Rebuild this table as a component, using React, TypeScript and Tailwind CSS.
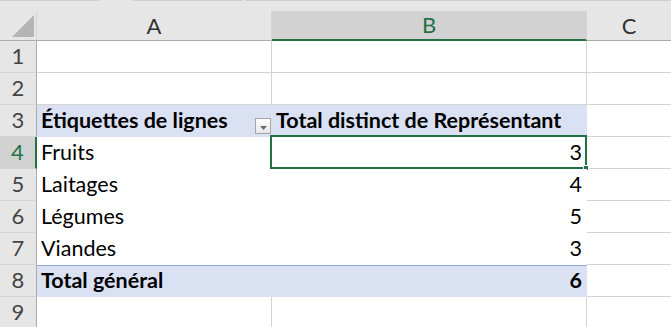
import React from 'react'

const FONT = { fontFamily: 'Lato, "Open Sans", sans-serif' }

const GRID = 'border-[#d4d4d4]'
const PIVOT_BG = 'bg-[#d9e1f2]'

type Row = { n: number; a?: string; b?: string; kind?: 'head' | 'item' | 'total' | 'blank' }

const rows: Row[] = [
  { n: 1, kind: 'blank' },
  { n: 2, kind: 'blank' },
  { n: 3, a: 'Étiquettes de lignes', b: 'Total distinct de Représentant', kind: 'head' },
  { n: 4, a: 'Fruits', b: '3', kind: 'item' },
  { n: 5, a: 'Laitages', b: '4', kind: 'item' },
  { n: 6, a: 'Légumes', b: '5', kind: 'item' },
  { n: 7, a: 'Viandes', b: '3', kind: 'item' },
  { n: 8, a: 'Total général', b: '6', kind: 'total' },
  { n: 9, kind: 'blank' },
]

function FilterButton() {
  return (
    <div className="absolute right-[1px] bottom-[2px] w-[16px] h-[16px] border border-[#a6a6a6] bg-gradient-to-b from-[#fdfdfd] to-[#e8e8e8] flex items-center justify-center">
      <svg width="7" height="4" viewBox="0 0 7 4" className="mt-[3px]">
        <path d="M0 0h7L3.5 4z" fill="#6b6b6b" />
      </svg>
    </div>
  )
}

function SheetRow({ row }: { row: Row }) {
  const active = row.n === 4
  const pivot = row.kind === 'head' || row.kind === 'total'
  const inTable = row.kind !== 'blank'
  const bold = pivot ? 'font-bold' : ''

  // borders of A/B cells depend on whether the row belongs to the pivot table
  let abBottom = `border-b ${GRID}`
  if (row.kind === 'head') abBottom = 'border-b border-[#d9e1f2]'
  if (row.kind === 'item') abBottom = 'border-b border-white'
  if (row.kind === 'total') abBottom = 'border-b border-[#d9e1f2]'
  const totalTop = row.kind === 'total' ? 'border-t border-t-[#8ea9db]' : ''

  return (
    <div className="flex h-[32px]">
      <div
        className={`w-[37px] shrink-0 h-[32px] flex items-end justify-center pb-[2px] text-[22px] leading-[28px] border-b border-[#d4d4d4] ${
          active
            ? 'bg-[#d2d2d2] text-[#217346] border-r-2 border-r-[#217346]'
            : 'bg-[#e6e6e6] text-[#444] border-r border-r-[#ababab]'
        }`}
      >
        {row.n}
      </div>
      <div
        className={`relative w-[235px] shrink-0 flex items-end pl-[4px] pb-[2px] text-[21.5px] leading-[28px] text-black whitespace-nowrap ${bold} ${
          pivot ? PIVOT_BG : 'bg-white'
        } ${inTable ? '' : `border-r ${GRID}`} ${abBottom} ${totalTop}`}
      >
        {row.a}
        {row.kind === 'head' && <FilterButton />}
      </div>
      <div
        className={`relative w-[315px] shrink-0 flex items-end pb-[2px] text-[21.5px] leading-[28px] text-black whitespace-nowrap border-r ${GRID} ${bold} ${
          pivot ? PIVOT_BG : 'bg-white'
        } ${row.kind === 'head' ? 'justify-start pl-[4px]' : 'justify-end pr-[4px]'} ${abBottom} ${totalTop}`}
      >
        {row.b}
        {active && (
          <div className="absolute -left-[2px] -top-[2px] -right-[1px] -bottom-[1px] border-2 border-[#217346] pointer-events-none">
            <div className="absolute -right-[4px] -bottom-[4px] w-[6px] h-[6px] bg-[#217346] border border-white" />
          </div>
        )}
      </div>
      <div className={`flex-1 h-[32px] bg-white border-b ${GRID}`} />
    </div>
  )
}

export default function App() {
  return (
    <div className="w-[671px] h-[327px] overflow-hidden bg-white" style={FONT}>
      {/* strip under the formula bar */}
      <div className="flex h-[11px] bg-[#e6e6e6]">
        <div className="w-[100px] border-t border-[#cfcfcf]" />
        <div className="w-[32px]" />
        <div className="w-[110px] border-t border-[#cfcfcf]" />
        <div className="w-[3px]" />
        <div className="flex-1 border-t border-[#cfcfcf]" />
      </div>

      {/* column headers */}
      <div className="flex h-[30px] bg-[#e6e6e6] text-[22px] leading-[28px]">
        <div className="w-[37px] shrink-0 relative border-r border-[#d4d4d4] border-b border-b-[#ababab]">
          <svg className="absolute left-[12px] top-[4px]" width="22" height="22" viewBox="0 0 22 22">
            <path d="M22 0V22H0z" fill="#b4b4b4" />
          </svg>
        </div>
        <div className="w-[235px] shrink-0 flex items-center justify-center text-[#333] border-r border-[#d4d4d4] border-b border-b-[#ababab]">
          A
        </div>
        <div className="w-[315px] shrink-0 flex items-center justify-center bg-[#d2d2d2] text-[#217346] border-r border-[#d4d4d4] border-b-2 border-b-[#217346]">
          B
        </div>
        <div className="flex-1 flex items-center justify-center text-[#333] border-b border-b-[#ababab]">C</div>
      </div>

      {rows.map(r => (
        <SheetRow key={r.n} row={r} />
      ))}
    </div>
  )
}
